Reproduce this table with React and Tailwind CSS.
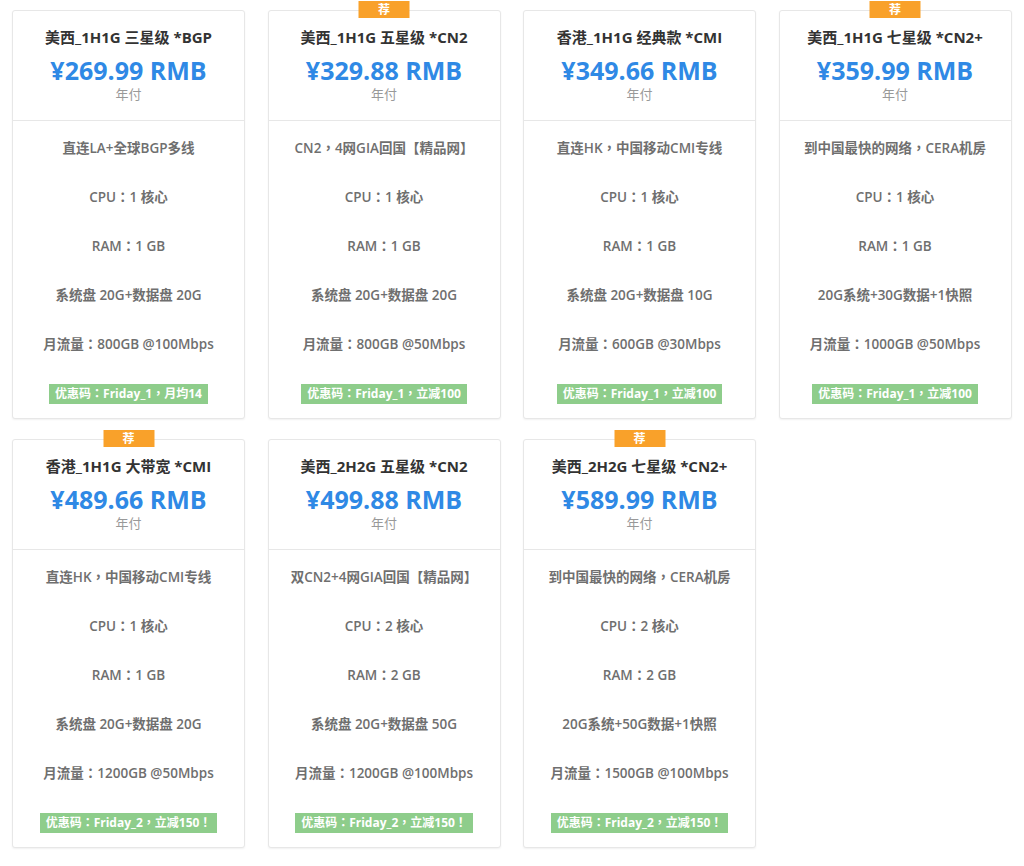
const plans = [
  {
    title: "美西_1H1G 三星级 *BGP",
    price: "¥269.99 RMB",
    hot: false,
    lines: ["直连LA+全球BGP多线", "CPU：1 核心", "RAM：1 GB", "系统盘 20G+数据盘 20G", "月流量：800GB @100Mbps"],
    coupon: "优惠码：Friday_1，月均14",
  },
  {
    title: "美西_1H1G 五星级 *CN2",
    price: "¥329.88 RMB",
    hot: true,
    lines: ["CN2，4网GIA回国【精品网】", "CPU：1 核心", "RAM：1 GB", "系统盘 20G+数据盘 20G", "月流量：800GB @50Mbps"],
    coupon: "优惠码：Friday_1，立减100",
  },
  {
    title: "香港_1H1G 经典款 *CMI",
    price: "¥349.66 RMB",
    hot: false,
    lines: ["直连HK，中国移动CMI专线", "CPU：1 核心", "RAM：1 GB", "系统盘 20G+数据盘 10G", "月流量：600GB @30Mbps"],
    coupon: "优惠码：Friday_1，立减100",
  },
  {
    title: "美西_1H1G 七星级 *CN2+",
    price: "¥359.99 RMB",
    hot: true,
    lines: ["到中国最快的网络，CERA机房", "CPU：1 核心", "RAM：1 GB", "20G系统+30G数据+1快照", "月流量：1000GB @50Mbps"],
    coupon: "优惠码：Friday_1，立减100",
  },
  {
    title: "香港_1H1G 大带宽 *CMI",
    price: "¥489.66 RMB",
    hot: true,
    lines: ["直连HK，中国移动CMI专线", "CPU：1 核心", "RAM：1 GB", "系统盘 20G+数据盘 20G", "月流量：1200GB @50Mbps"],
    coupon: "优惠码：Friday_2，立减150！",
  },
  {
    title: "美西_2H2G 五星级 *CN2",
    price: "¥499.88 RMB",
    hot: false,
    lines: ["双CN2+4网GIA回国【精品网】", "CPU：2 核心", "RAM：2 GB", "系统盘 20G+数据盘 50G", "月流量：1200GB @100Mbps"],
    coupon: "优惠码：Friday_2，立减150！",
  },
  {
    title: "美西_2H2G 七星级 *CN2+",
    price: "¥589.99 RMB",
    hot: true,
    lines: ["到中国最快的网络，CERA机房", "CPU：2 核心", "RAM：2 GB", "20G系统+50G数据+1快照", "月流量：1500GB @100Mbps"],
    coupon: "优惠码：Friday_2，立减150！",
  },
];

function PlanCard({ plan }) {
  return (
    <div className="relative bg-white border border-[#e7e7e7] rounded-[3px] shadow-[0_1px_2px_rgba(0,0,0,0.06)]">
      {plan.hot && (
        <div className="absolute -top-[10px] left-1/2 -translate-x-1/2 w-[51px] h-[17px] bg-[#f9a12a] text-white text-[12px] font-bold leading-[17px] text-center">
          荐
        </div>
      )}
      <div className="pt-[16px] pb-[18px] text-center border-b border-[#e7e7e7]">
        <div className="text-[15px] font-bold leading-[20px] text-[#333]">{plan.title}</div>
        <div className="mt-[7px] text-[25px] font-bold leading-[32px] text-[#2f89e5]">{plan.price}</div>
        <div className="text-[13px] leading-[16px] text-[#999]">年付</div>
      </div>
      <div className="pt-[3px] text-center">
        {plan.lines.map((l) => (
          <div key={l} className="h-[49px] flex items-center justify-center text-[13.5px] font-semibold text-[#6f6f6f]">
            {l}
          </div>
        ))}
        <div className="h-[49px] flex items-center justify-center">
          <span className="bg-[#8ecd8b] text-white text-[12px] font-bold leading-[20px] px-[6px]">
            {plan.coupon}
          </span>
        </div>
      </div>
    </div>
  );
}

export default function App() {
  return (
    <div
      className="bg-white min-h-[866px] pl-[12px] pt-[10px]"
      style={{ fontFamily: "'Open Sans','Noto Sans CJK TC',sans-serif" }}
    >
      <div className="grid grid-cols-[repeat(4,233px)] gap-x-[22.5px] gap-y-[20px]">
        {plans.map((p) => (
          <PlanCard key={p.title} plan={p} />
        ))}
      </div>
    </div>
  );
}
